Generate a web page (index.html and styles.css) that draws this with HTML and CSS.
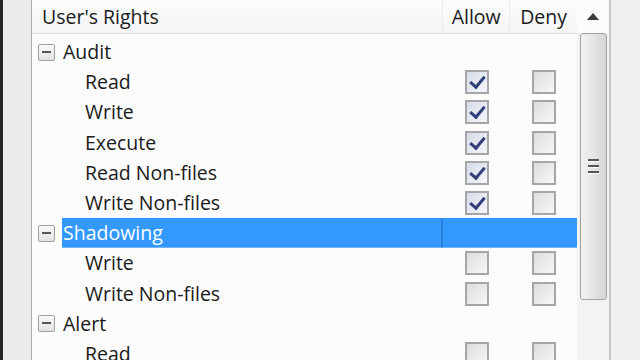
FILE: index.html
```html
<!DOCTYPE html>
<html>
<head>
<meta charset="utf-8">
<link rel="stylesheet" href="styles.css">
</head>
<body>
<div class="frame">
  <div class="edge"></div>
  <div class="gutter"></div>
  <div class="panel">
    <div class="header">
      <div class="hcell name">User's Rights</div>
      <div class="hcell col">Allow</div>
      <div class="hcell col">Deny</div>
    </div>
    <div class="rows">
      <div class="row group"><span class="toggle"></span><span class="label">Audit</span><span class="cell"></span><span class="cell"></span></div>
      <div class="row child"><span class="label">Read</span><span class="cell"><span class="cb checked"></span></span><span class="cell"><span class="cb"></span></span></div>
      <div class="row child"><span class="label">Write</span><span class="cell"><span class="cb checked"></span></span><span class="cell"><span class="cb"></span></span></div>
      <div class="row child"><span class="label">Execute</span><span class="cell"><span class="cb checked"></span></span><span class="cell"><span class="cb"></span></span></div>
      <div class="row child"><span class="label">Read Non-files</span><span class="cell"><span class="cb checked"></span></span><span class="cell"><span class="cb"></span></span></div>
      <div class="row child"><span class="label">Write Non-files</span><span class="cell"><span class="cb checked"></span></span><span class="cell"><span class="cb"></span></span></div>
      <div class="row group selected"><span class="toggle"></span><span class="label">Shadowing</span><span class="cell"></span><span class="cell"></span></div>
      <div class="row child"><span class="label">Write</span><span class="cell"><span class="cb"></span></span><span class="cell"><span class="cb"></span></span></div>
      <div class="row child"><span class="label">Write Non-files</span><span class="cell"><span class="cb"></span></span><span class="cell"><span class="cb"></span></span></div>
      <div class="row group"><span class="toggle"></span><span class="label">Alert</span><span class="cell"></span><span class="cell"></span></div>
      <div class="row child"><span class="label">Read</span><span class="cell"><span class="cb"></span></span><span class="cell"><span class="cb"></span></span></div>
    </div>
  </div>
  <div class="scrollbar">
    <div class="arrow"><svg width="12" height="7" viewBox="0 0 12 7"><polygon points="0,7 12,7 6,0" fill="#3a3a3a"/></svg></div>
    <div class="thumb"><span class="grip"></span><span class="grip"></span><span class="grip"></span></div>
  </div>
  <div class="outer"></div>
</div>
</body>
</html>
```
FILE: styles.css
```css
html, body {
  margin: 0;
  padding: 0;
  width: 640px;
  height: 360px;
  overflow: hidden;
  background: #f0f0f0;
  font-family: "Open Sans", "Segoe UI", sans-serif;
}
.frame {
  display: flex;
  height: 360px;
}
.edge {
  width: 3px;
  background: #262626;
}
.gutter {
  width: 28px;
  background: #ebebeb;
  border-right: 1px solid #a9a9a9;
}
.panel {
  width: 545px;
  background: #fcfcfc;
  display: flex;
  flex-direction: column;
}
.header {
  display: flex;
  background: linear-gradient(#fdfdfd, #f4f4f4);
  border-bottom: 1px solid #dcdcdc;
  box-sizing: border-box;
  height: 34px;
}
.hcell {
  font-size: 19.5px;
  color: #1a1a1a;
  line-height: 34px;
  height: 33px;
  white-space: nowrap;
}
.hcell.name {
  width: 401px;
  padding-left: 10px;
  border-right: 1px solid #ececec;
}
.hcell.col {
  width: 66px;
  text-align: center;
  border-right: 1px solid #ececec;
}
.hcell.col:last-child {
  border-right: none;
  width: 67px;
}
.rows {
  padding-top: 3px;
}
.row {
  height: 30.2px;
  display: flex;
  align-items: center;
  font-size: 19.5px;
  color: #1a1a1a;
  white-space: nowrap;
}
.row .label {
  flex: 1;
  line-height: 30px;
}
.row.group .label {
  padding-left: 1px;
}
.row.child .label {
  padding-left: 53px;
}
.toggle {
  width: 15px;
  height: 15px;
  margin-left: 6px;
  margin-right: 7px;
  border: 1px solid #a0a0a0;
  border-radius: 2px;
  background: linear-gradient(#fafafa, #e2e2e2);
  position: relative;
  flex: none;
}
.toggle::after {
  content: "";
  position: absolute;
  left: 3px;
  right: 3px;
  top: 6px;
  height: 2px;
  background: #555;
}
.cell {
  width: 67px;
  height: 100%;
  display: flex;
  align-items: center;
  justify-content: center;
  flex: none;
}
.cb {
  width: 20px;
  height: 20px;
  border: 2px solid #a6a6a6;
  background: linear-gradient(135deg, #dcdcdc, #f8f8f8);
  position: relative;
}
.cb.checked {
  background: linear-gradient(135deg, #d6dbe8, #f6f7fb);
}
.cb.checked::after {
  content: "";
  position: absolute;
  left: 6px;
  top: 1px;
  width: 6px;
  height: 12px;
  border-right: 3px solid #34407a;
  border-bottom: 3px solid #34407a;
  transform: rotate(40deg);
}
.row.selected {
  color: #ffffff;
}
.row.selected .label {
  background: #3399ff;
  height: 29px;
  line-height: 29px;
  border-bottom: 1px solid #74b5f5;
  border-right: 2px solid #2a7fd6;
  align-self: flex-start;
}
.row.selected .cell {
  background: #3399ff;
  height: 29px;
  border-bottom: 1px solid #74b5f5;
  align-self: flex-start;
}
.scrollbar {
  width: 32px;
  background: #f3f3f3;
  border-right: 2px solid #c8c8c8;
  display: flex;
  flex-direction: column;
  align-items: center;
}
.arrow {
  height: 33px;
  width: 100%;
  display: flex;
  align-items: center;
  justify-content: center;
  background: #fbfbfb;
}
.thumb {
  width: 27px;
  height: 267px;
  margin-left: 1px;
  box-sizing: border-box;
  border: 1px solid #a2a2a2;
  border-radius: 3px;
  background: linear-gradient(90deg, #f2f2f2, #e8e8e8 40%, #d4d4d4);
  display: flex;
  flex-direction: column;
  align-items: center;
  justify-content: center;
  gap: 3px;
}
.grip {
  width: 11px;
  height: 2px;
  background: #555;
  border-bottom: 1px solid #fff;
}
.outer {
  flex: 1;
  background: #f0f0f0;
}
```
